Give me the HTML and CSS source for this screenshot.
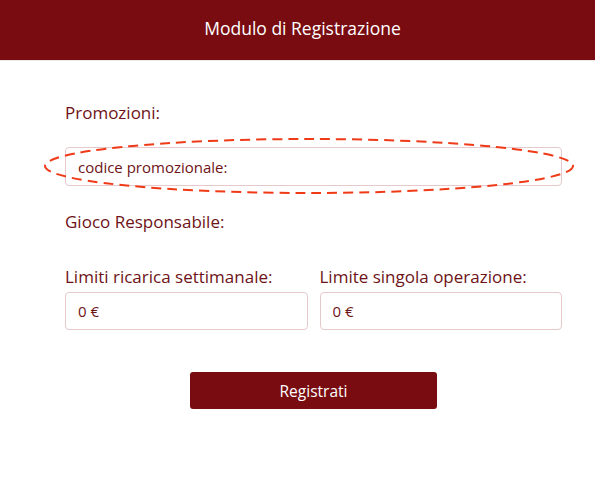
FILE: index.html
```html
<!DOCTYPE html>
<html>
  <head>
    <title>Modulo di Registrazione</title>
    <link rel="stylesheet" href="styles.css">
  </head>

  <body>
    <div class="header">Modulo di Registrazione</div>
    <form class="container" id="regForm">
      <div class="section-title">Promozioni:</div>
      <div class="promo-group">
        <input type="text" class="field" placeholder="codice promozionale:" />
        <svg class="highlight" width="534" height="60" viewBox="0 0 534 60">
          <ellipse cx="267" cy="30" rx="264" ry="27" fill="none" stroke="#ef3a17" stroke-width="2" stroke-dasharray="10 6" />
        </svg>
      </div>

      <div class="section-title section-title--gap">Gioco Responsabile:</div>

      <div class="limits">
        <div class="form-group">
          <label for="weekly">Limiti ricarica settimanale:</label>
          <input type="text" id="weekly" class="field field--small" value="0 €" />
        </div>
        <div class="form-group">
          <label for="single">Limite singola operazione:</label>
          <input type="text" id="single" class="field field--small" value="0 €" />
        </div>
      </div>

      <div class="actions">
        <button type="submit">Registrati</button>
      </div>
    </form>
  </body>
</html>
```

FILE: styles.css
```css
body {
  margin: 0;
  font-family: "Open Sans", "DejaVu Sans", sans-serif;
  background: #fff;
}

.header {
  height: 60px;
  line-height: 56px;
  padding-left: 10px;
  background-color: #780c10;
  color: #fff;
  text-align: center;
  font-size: 17.5px;
  border-bottom: 1px solid #e8e8e8;
}

.container {
  padding: 41px 33px 0 65px;
  display: flex;
  flex-direction: column;
}

.section-title {
  font-size: 17px;
  line-height: 22px;
  color: #6e1317;
  margin-bottom: 23px;
}

.section-title--gap {
  margin-top: 25px;
  margin-bottom: 33px;
}

.promo-group {
  position: relative;
}

.field {
  box-sizing: border-box;
  width: 100%;
  height: 39px;
  padding: 0 12px;
  border: 1px solid #e6c9cd;
  border-radius: 4px;
  font-family: inherit;
  font-size: 15px;
  color: #6e1317;
  outline: none;
}

.field::placeholder {
  color: #6e1317;
  opacity: 1;
}

.field--small {
  height: 38px;
}

.highlight {
  position: absolute;
  left: -23px;
  top: -11px;
  pointer-events: none;
}

.limits {
  display: grid;
  grid-template-columns: 1fr 1fr;
  gap: 12px;
}

.form-group {
  display: flex;
  flex-direction: column;
  gap: 4px;
}

.form-group label {
  font-size: 17px;
  line-height: 22px;
  color: #6e1317;
}

.actions {
  display: flex;
  justify-content: center;
  margin-top: 42px;
}

button {
  width: 247px;
  height: 37px;
  background-color: #780c10;
  color: #fff;
  border: none;
  border-radius: 3px;
  font-family: inherit;
  font-size: 15.5px;
  cursor: pointer;
}
```
